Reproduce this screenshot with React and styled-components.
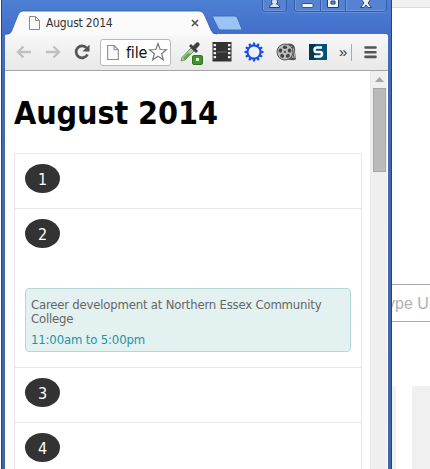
import React from "react";
import styled, { createGlobalStyle } from "styled-components";

const Global = createGlobalStyle`
  * { box-sizing: border-box; }
  body { margin: 0; background: #fff; overflow: hidden; }
`;
const uiFont = `"DejaVu Sans Condensed", "DejaVu Sans", sans-serif`;

const Desktop = styled.main`
  display: grid;
  grid-template-columns: 392px 38px;
  width: 430px;
  height: 469px;
  overflow: hidden;
  font-family: ${uiFont};
  font-stretch: condensed;
`;
const Window = styled.section`
  display: flex;
  flex-direction: column;
  height: 469px;
  margin-left: 1px;
  background: linear-gradient(#4d80d3 0, #426fca 34px, #4369b2 90px, #3e66a7 100%);
  border-left: 1px solid #29467f;
  border-right: 1px solid #23437e;
`;
const TitleBar = styled.header`
  display: flex;
  height: 34px;
  flex: none;
`;
const Tab = styled.div`
  position: relative;
  width: 212px;
  height: 35px;
  margin-left: 3px;
  padding: 15px 18px 0 24px;
  display: flex;
  align-items: flex-start;
  gap: 6px;
`;
const TabShape = styled.svg`
  position: absolute;
  inset: 0;
`;
const TabTitle = styled.span`
  position: relative;
  flex: 1;
  font-size: 12px;
  line-height: 16px;
  letter-spacing: -0.2px;
  color: #333;
  white-space: nowrap;
`;
const Glyph = styled.svg`
  position: relative;
  flex: none;
  display: block;
  margin-top: ${(p) => p.$drop || 0}px;
`;
const NewTab = styled.svg`
  flex: none;
  margin: 15px 0 0 -7px;
`;
const Controls = styled.div`
  display: flex;
  gap: 7px;
  margin-left: 19px;
  height: 12px;
`;
const ControlGroup = styled.div`
  display: flex;
  border: 1px solid #335ca9;
  border-top: 0;
  border-radius: 0 0 4px 4px;
  box-shadow: 0 1px 0 #6590d9;
  overflow: hidden;
`;
const Control = styled.div`
  width: ${(p) => p.$width}px;
  height: 11px;
  display: flex;
  justify-content: center;
  background: #5583d2;
  box-shadow: inset 1px -1px 0 #6e98df;
  & + & { border-left: 1px solid #335ca9; }
`;
const Body = styled.div`
  display: flex;
  flex-direction: column;
  flex: 1;
  min-height: 0;
  margin: 0 3px 0 3px;
  border-radius: 0 3px 0 0;
  overflow: hidden;
  background: #fff;
`;
const Toolbar = styled.nav`
  display: flex;
  align-items: center;
  height: 37px;
  flex: none;
  background: linear-gradient(#f8f8f8, #e8e8e8);
  border-bottom: 1px solid #a5a5a5;
`;
const IconSlot = styled.div`
  width: ${(p) => p.$width}px;
  display: flex;
  justify-content: center;
  flex: none;
`;
const Address = styled.div`
  display: flex;
  align-items: center;
  width: 71px;
  height: 27px;
  margin: 0 6px 0 2px;
  padding-left: 6px;
  border: 1px solid #b9b9b9;
  border-radius: 3px;
  background: #fff;
  font-size: 16px;
  letter-spacing: -0.2px;
  color: #111;
`;
const AddressText = styled.span`
  width: 22px;
  margin-left: 7px;
  flex: none;
`;
const More = styled.span`
  width: 16px;
  padding: 0 0 2px 5px;
  font-family: "Liberation Sans", sans-serif;
  font-size: 15px;
  color: #333;
`;
const Viewport = styled.div`
  display: flex;
  flex: 1;
  min-height: 0;
`;
const Page = styled.article`
  width: 365px;
  padding: 22px 8px 0 9px;
  height: 398px;
  overflow: hidden;
`;
const Heading = styled.h1`
  height: 60px;
  margin: 0;
  font: bold 32px/40px ${uiFont};
  font-stretch: condensed;
  letter-spacing: -0.1px;
  white-space: nowrap;
  color: #000;
`;
const Days = styled.ol`
  width: 348px;
  margin: 0;
  padding: 0;
  list-style: none;
  border: 1px solid #e8e8ec;
`;
const Day = styled.li`
  height: ${(p) => (p.$busy ? 159 : 55)}px;
  padding: 10px;
  border-bottom: 1px solid #e8e8ec;
`;
const DayNumber = styled.div`
  width: 35px;
  height: 29px;
  border-radius: 50%;
  background: #333;
  color: #fff;
  font-size: 16px;
  line-height: 31px;
  text-align: center;
`;
const Event = styled.div`
  width: 326px;
  height: 64px;
  margin-top: 40px;
  padding: 9px 5px 0;
  border: 1px solid #b5d8d7;
  border-radius: 4px;
  background: #e3f1f1;
  color: #666;
  font-size: 13px;
  line-height: 14px;
  letter-spacing: -0.2px;
`;
const EventTime = styled.div`
  margin-top: 7px;
  color: #2494a5;
  letter-spacing: -0.15px;
`;
const Scrollbar = styled.aside`
  display: flex;
  flex-direction: column;
  align-items: center;
  width: 17px;
  padding-top: 6px;
  background: #efefef;
  border-left: 1px solid #eaeaea;
`;
const Thumb = styled.div`
  width: 13px;
  height: 84px;
  margin: 5px 0 0 0;
  border: 1px solid #a8a8a8;
  background: #bababa;
`;
const Behind = styled.section`
  height: 469px;
  overflow: hidden;
  background: #fff;
`;
const BehindStrip = styled.div`
  height: 8px;
  background: #f1f1f1;
  border-bottom: 1px solid #d8d8d8;
`;
const SearchBox = styled.div`
  display: flex;
  justify-content: flex-start;
  margin-top: 276px;
  width: 60px;
  height: 38px;
  border: solid #aaa;
  border-width: 1px 0;
  color: #b1b1b1;
  font: 16px/37px "Liberation Sans", sans-serif;
  text-indent: -5px;
  white-space: nowrap;
  overflow: hidden;
`;
const Tiles = styled.div`
  display: grid;
  grid-template-columns: 4px 18px;
  gap: 16px;
  height: 83px;
  margin-top: 64px;
`;
const Tile = styled.div`
  background: #f0f0f0;
`;

const FileIcon = ({ width = 11, height = 14, drop = 0 }) => (
  <Glyph $drop={drop} width={width} height={height} viewBox="0 0 11 14">
    <path d="M.5.5h6l4 4v9H.5z" fill="#fafafa" stroke="#8b8b8b" />
    <path d="M6.5.5v4h4" fill="none" stroke="#8b8b8b" />
  </Glyph>
);

const Arrow = ({ flip }) => (
  <Glyph width="15" height="14" viewBox="0 0 15 14">
    <path d={flip ? "M0 7h13M7.5 1.5 13 7l-5.5 5.5" : "M15 7H2M7.5 1.5 2 7l5.5 5.5"} fill="none" stroke="#c0c0c0" strokeWidth="2.4" />
  </Glyph>
);

const teeth = Array.from({ length: 12 }, (_, i) => i * 30);
const holes = Array.from({ length: 5 }, (_, i) => i * 72);

const days = [
  { number: 1 },
  { number: 2, title: "Career development at Northern Essex Community College", time: "11:00am to 5:00pm" },
  { number: 3 },
  { number: 4 },
];

export default function App() {
  return (
    <Desktop>
      <Global />
      <Window>
        <TitleBar>
          <Tab>
            <TabShape width="212" height="35" viewBox="0 0 212 35">
              <path d="M0 35C5 34 6 33 7 30l6-15q1.500-4 5-4h176q4 0 5.500 4l7 16q2 4 5.500 4z" fill="#fafafa" />
              <path d="M0 34.500C5 34 6 33 7 30l6-15q1.500-4 5-4h176q4 0 5.500 4l7 16q2 3 5.500 3" fill="none" stroke="#365ca5" strokeWidth=".8" />
            </TabShape>
            <FileIcon drop={1} />
            <TabTitle>August 2014</TabTitle>
            <Glyph $drop={4} width="8" height="8" viewBox="0 0 8 8">
              <path d="m1 1 6 6m0-6L1 7" stroke="#555" strokeWidth="1.7" />
            </Glyph>
          </Tab>
          <NewTab width="33" height="17" viewBox="0 0 33 17">
            <path d="M3.500 1h21q2 0 3 2l4 10q1 2-1 2H11q-2 0-3-2L3 3q-1-2 .5-2z" fill="#9bc4f4" stroke="#426cb7" />
          </NewTab>
          <Controls>
            <ControlGroup>
              <Control $width={23}>
                <svg width="13" height="9"><path d="M1.500 7.500c0-2 1-3 3-3.500-2-2-1-5 2-5s4 3 2 5c2 .5 3 1.500 3 3.500z" fill="#d4e2fa" stroke="#233a70" /></svg>
              </Control>
            </ControlGroup>
            <ControlGroup>
              <Control $width={25}>
                <svg width="15" height="10"><rect x="2" y="3.500" width="11" height="4" rx="1" fill="#eef3ff" stroke="#315590" /></svg>
              </Control>
              <Control $width={25}>
                <svg width="14" height="10"><path d="M1.500-1h11v8.500h-11z" fill="#edf4ff" stroke="#263e70" /><path d="M5 1h4v3H5z" fill="#6b8fd0" stroke="#263e70" /></svg>
              </Control>
              <Control $width={41}>
                <svg width="14" height="10"><path d="m2-1 3 4-3.500 4.500h3.700L7 5l1.800 2.500h3.700L9 3l3-4" fill="#e9f2ff" stroke="#294581" /></svg>
              </Control>
            </ControlGroup>
          </Controls>
        </TitleBar>
        <Body>
          <Toolbar>
            <IconSlot $width={36}><Arrow /></IconSlot>
            <IconSlot $width={25}><Arrow flip /></IconSlot>
            <IconSlot $width={32}>
              <Glyph width="17" height="16" viewBox="0 0 17 16">
                <path d="M13.500 10.500A6 6 0 1 1 12.700 4" fill="none" stroke="#555" strokeWidth="2.700" />
                <path d="M15.500.5v7h-7z" fill="#555" />
              </Glyph>
            </IconSlot>
            <Address>
              <FileIcon width={12} height={15} />
              <AddressText>file</AddressText>
              <Glyph width="20" height="20" viewBox="0 0 20 20">
                <path d="m10 1.500 2.200 6 6.300.2-4.900 4 1.700 6.100-5.300-3.500-5.300 3.500 1.700-6.100-4.900-4 6.300-.2z" fill="#fff" stroke="#777" strokeWidth="1.200" />
              </Glyph>
            </Address>
            <IconSlot $width={29}>
              <Glyph width="25" height="26" viewBox="0 0 25 26">
                <path d="M3 18.500 12 9l3 3-9 9-4 1z" fill="#aed797" stroke="#769078" />
                <path d="m4 19 5-5 3 1-6 6z" fill="#63a94a" />
                <path d="m10 7 7 7 2-2-2-2 3-3c2-2-1-5-3-3l-3 3-2-2z" fill="#3d4145" />
                <rect x="13.500" y="16.500" width="10" height="9" rx="1.500" fill="#43932d" stroke="#2f781d" />
                <path d="M17 19h3v3h-3z" fill="#dff3d5" />
              </Glyph>
            </IconSlot>
            <IconSlot $width={32}>
              <Glyph width="20" height="20" viewBox="0 0 20 20">
                <path d="M.5 0h19v19.500H.5z" fill="#333" />
                <path d="M2.800 2v16M17.200 2v16" stroke="#eee" strokeWidth="2.500" strokeDasharray="2.200 1.800" />
                <path d="M5 10h10" stroke="#666" />
              </Glyph>
            </IconSlot>
            <IconSlot $width={32}>
              <Glyph width="20" height="20" viewBox="-10 -10 20 20">
                <circle r="6.500" fill="none" stroke="#174fe4" strokeWidth="2" />
                {teeth.map((a) => <path key={a} d="M-1.500-6.500-1-9.500H1l.5 3z" fill="#174fe4" transform={`rotate(${a})`} />)}
              </Glyph>
            </IconSlot>
            <IconSlot $width={32}>
              <Glyph width="21" height="20" viewBox="-10 -10 21 20">
                <path d="M0-8c7-2 10 2 9 8l1 7c-3 3-6 0-9 1z" fill="#555" />
                <path d="m5-6 2 12m0-10 2 10" stroke="#bbb" />
                <circle cx="-1" r="8" fill="#bbb" stroke="#555" />
                {holes.map((a) => <ellipse key={a} cx="-1" cy="-4.800" rx="2.100" ry="1.800" fill="#444" transform={`rotate(${a} -1 0)`} />)}
                <circle cx="-1" r="1" fill="#333" />
              </Glyph>
            </IconSlot>
            <IconSlot $width={32}>
              <Glyph width="18" height="16" viewBox="0 0 18 16">
                <path fill="#075077" d="M0 0h18v16H0z" /><path fill="#073653" d="M0 0h7v16H0z" />
                <path d="M13 3.500H8Q5.500 3.500 5.500 6T8 8h3q2 0 2 2t-2 2.500H5" stroke="#fff" strokeWidth="2.500" fill="none" />
              </Glyph>
            </IconSlot>
            <More>»</More>
            <Glyph width="3" height="17"><path d="M1.500 0v17" stroke="#aaa" /></Glyph>
            <IconSlot $width={34}>
              <Glyph width="13" height="14"><path d="M1.500 2.500h10m-10 4.700h10m-10 4.700h10" stroke="#555" strokeWidth="2.600" strokeLinecap="round" /></Glyph>
            </IconSlot>
          </Toolbar>
          <Viewport>
            <Page>
              <Heading>August 2014</Heading>
              <Days>
                {days.map((day) => (
                  <Day key={day.number} $busy={!!day.title}>
                    <DayNumber>{day.number}</DayNumber>
                    {day.title && <Event>{day.title}<EventTime>{day.time}</EventTime></Event>}
                  </Day>
                ))}
              </Days>
            </Page>
            <Scrollbar>
              <Glyph width="9" height="6"><path d="M0 5 4.500 0 9 5z" fill="#a4a4a4" /></Glyph>
              <Thumb />
            </Scrollbar>
          </Viewport>
        </Body>
      </Window>
      <Behind>
        <BehindStrip />
        <SearchBox>ype UR</SearchBox>
        <Tiles><Tile /><Tile /></Tiles>
      </Behind>
    </Desktop>
  );
}
